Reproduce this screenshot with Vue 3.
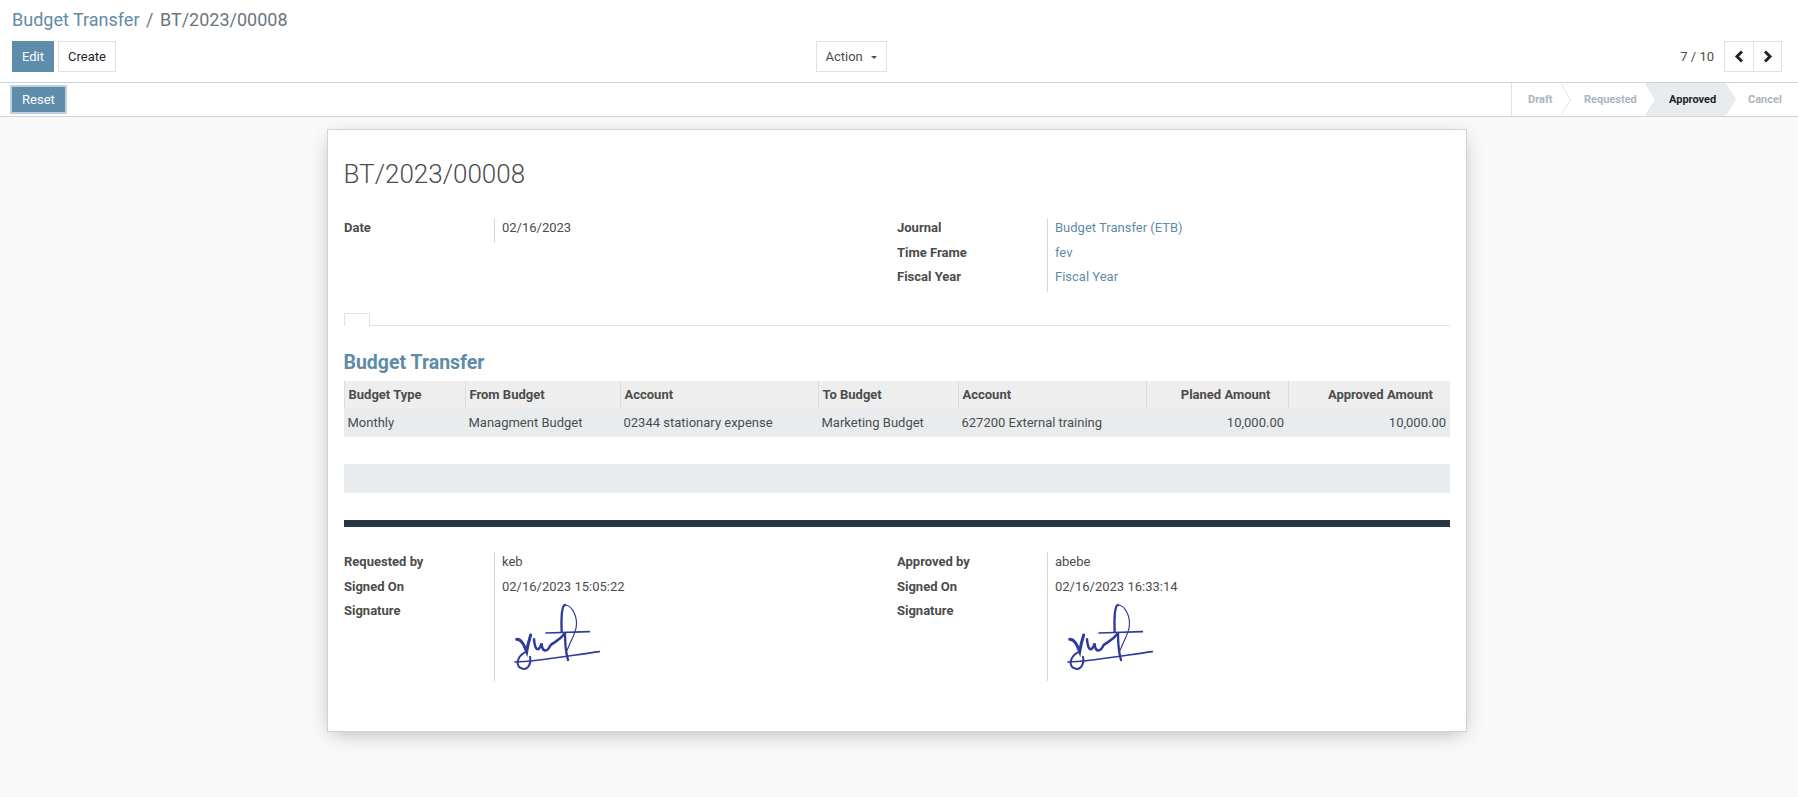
<template>
  <div class="page">
    <div class="control-panel">
      <div class="breadcrumb">
        <a class="crumb-link">Budget Transfer</a>
        <span class="crumb-sep">/</span>
        <span class="crumb-current">BT/2023/00008</span>
      </div>
      <div class="cp-row">
        <div class="cp-left">
          <button class="btn btn-primary">Edit</button>
          <button class="btn btn-white">Create</button>
        </div>
        <div class="cp-center">
          <button class="btn btn-white btn-action">Action<span class="caret"></span></button>
        </div>
        <div class="cp-right">
          <span class="pager-value">7 / 10</span>
          <div class="pager-buttons">
            <button class="btn btn-white pager-btn pager-prev">
              <svg width="10" height="13" viewBox="0 0 10 13"><path d="M8 1.5 3 6.5l5 5" fill="none" stroke="#212529" stroke-width="3" /></svg>
            </button>
            <button class="btn btn-white pager-btn pager-next">
              <svg width="10" height="13" viewBox="0 0 10 13"><path d="M2 1.5l5 5-5 5" fill="none" stroke="#212529" stroke-width="3" /></svg>
            </button>
          </div>
        </div>
      </div>
    </div>

    <div class="statusbar">
      <button class="btn-reset">Reset</button>
      <div class="steps">
        <div v-for="(step, i) in steps" :key="step" class="step" :class="['step-' + i, { active: step === 'Approved' }]" :style="{ zIndex: 10 - i }">{{ step }}</div>
      </div>
    </div>

    <div class="sheet-wrap">
      <div class="sheet">
        <h1 class="title">BT/2023/00008</h1>

        <div class="group-row top-group">
          <div class="group">
            <div class="field"><label>Date</label><div class="value">02/16/2023</div></div>
          </div>
          <div class="group">
            <div class="field"><label>Journal</label><div class="value link">Budget Transfer (ETB)</div></div>
            <div class="field"><label>Time Frame</label><div class="value link">fev</div></div>
            <div class="field"><label>Fiscal Year</label><div class="value link">Fiscal Year</div></div>
          </div>
        </div>

        <div class="tabs"><div class="tab"></div></div>

        <h2 class="section-title">Budget Transfer</h2>

        <table class="lines">
          <colgroup>
            <col v-for="w in colWidths" :key="w" :style="{ width: w + 'px' }" />
          </colgroup>
          <thead>
            <tr>
              <th>Budget Type</th>
              <th>From Budget</th>
              <th>Account</th>
              <th>To Budget</th>
              <th>Account</th>
              <th class="num">Planed Amount</th>
              <th class="num">Approved Amount</th>
            </tr>
          </thead>
          <tbody>
            <tr>
              <td>Monthly</td>
              <td>Managment Budget</td>
              <td>02344 stationary expense</td>
              <td>Marketing Budget</td>
              <td>627200 External training</td>
              <td class="num">10,000.00</td>
              <td class="num">10,000.00</td>
            </tr>
          </tbody>
        </table>

        <div class="grey-band"></div>
        <div class="dark-bar"></div>

        <div class="group-row">
          <div v-for="s in signers" :key="s.label" class="group">
            <div class="field"><label>{{ s.label }}</label><div class="value">{{ s.name }}</div></div>
            <div class="field"><label>Signed On</label><div class="value">{{ s.date }}</div></div>
            <div class="field sign-field">
              <label>Signature</label>
              <div class="value">
                <svg class="signature" width="95" height="75" viewBox="0 0 285 225">
                  <path v-for="(d, i) in signaturePaths" :key="i" :d="d.path" :stroke-width="d.width" fill="none" stroke="#2e3a9c" stroke-linecap="round" />
                </svg>
              </div>
            </div>
          </div>
        </div>
      </div>
    </div>
  </div>
</template>

<script setup>
const steps = ['Draft', 'Requested', 'Approved', 'Cancel']
const colWidths = [121, 155, 198, 140, 188, 142, 162]

const signers = [
  { label: 'Requested by', name: 'keb', date: '02/16/2023 15:05:22' },
  { label: 'Approved by', name: 'abebe', date: '02/16/2023 16:33:14' }
]

// hand signature, traced roughly from the scan
const signaturePaths = [
  { path: 'M155 95C153 60 155 15 165 15', width: 7 },
  { path: 'M165 15C185 15 205 50 198 85C192 110 178 130 172 150', width: 3.5 },
  { path: 'M108 99L238 95', width: 5 },
  { path: 'M15 186C80 185 190 165 268 155', width: 5 },
  { path: 'M20 118C35 118 42 135 50 155C53 135 58 118 62 105', width: 9 },
  { path: 'M50 155C25 165 15 190 30 203C50 215 65 195 60 170', width: 6 },
  { path: 'M72 118C75 150 85 160 95 130C96 155 110 160 122 135C135 125 150 120 165 100', width: 7.5 },
  { path: 'M165 100C165 130 168 160 174 180', width: 7 }
]
</script>

<style>
html, body {
  margin: 0;
  background: #f9f9f9;
}
</style>

<style scoped>
.page {
  min-height: 797px;
  font-family: Roboto, "Liberation Sans", sans-serif;
  font-size: 13px;
  color: #4c4c4c;
  background: #f9f9f9;
}

button {
  font-family: inherit;
  font-size: 13px;
  cursor: pointer;
}

.control-panel {
  background: #fff;
  height: 82px;
  padding: 0 16px 0 12px;
  border-bottom: 1px solid #ced4da;
}

.breadcrumb {
  height: 41px;
  line-height: 40px;
  font-size: 18px;
  color: #6c757d;
}

.crumb-link {
  color: #5f8ba8;
}

.crumb-sep {
  margin: 0 6.5px;
}

.cp-row {
  display: grid;
  grid-template-columns: 1fr auto 1fr;
  align-items: start;
}

.cp-left {
  display: flex;
  gap: 4px;
}

.cp-center {
  margin-right: 92px;
}

.cp-right {
  display: flex;
  justify-content: flex-end;
  align-items: center;
  height: 31px;
}

.btn {
  height: 31px;
  padding: 0 9px;
  border: 1px solid transparent;
  border-radius: 0;
  box-sizing: border-box;
  white-space: nowrap;
}

.btn-primary {
  background: #5e8cab;
  border-color: #5e8cab;
  color: #fff;
}

.btn-white {
  background: #fff;
  border-color: #dee2e6;
  color: #212529;
}

.btn-action {
  width: 71px;
  color: #4c4c4c;
}

.caret {
  display: inline-block;
  margin-left: 8px;
  vertical-align: 2px;
  border-top: 3.5px solid #4c4c4c;
  border-left: 3.5px solid transparent;
  border-right: 3.5px solid transparent;
}

.pager-value {
  margin-right: 10px;
  color: #4c4c4c;
}

.pager-buttons {
  display: flex;
}

.pager-btn {
  display: flex;
  align-items: center;
  justify-content: center;
  padding: 0;
}

.pager-prev {
  width: 30px;
}

.pager-next {
  width: 29px;
  margin-left: -1px;
}

.statusbar {
  display: flex;
  justify-content: space-between;
  align-items: center;
  height: 33px;
  background: #fff;
  border-bottom: 1px solid #ced4da;
  padding-left: 12px;
}

.btn-reset {
  height: 25px;
  width: 53px;
  padding: 0;
  background: #5e8cab;
  color: #fff;
  border: none;
  box-shadow: 0 0 0 2px #bfd1de;
}

.steps {
  display: flex;
  height: 33px;
  border-left: 1px solid #dee2e6;
}

.step {
  position: relative;
  box-sizing: border-box;
  line-height: 33px;
  font-size: 11px;
  font-weight: 700;
  color: #adb5bd;
  background: #fff;
  padding-left: 23px;
}

.step-0 {
  width: 49px;
  padding-left: 16px;
}

.step-1 {
  width: 85px;
}

.step-2 {
  width: 80px;
}

.step-3 {
  width: 72px;
  padding-left: 22px;
}

.step:not(.step-3)::before,
.step:not(.step-3)::after {
  content: "";
  position: absolute;
  top: 0;
  bottom: 0;
  width: 10px;
  clip-path: polygon(0 0, 100% 50%, 0 100%);
}

.step::before {
  left: 100%;
  background: #dee2e6;
}

.step::after {
  left: calc(100% - 1px);
  background: #fff;
}

.step.active {
  background: #e9ecef;
  color: #212529;
}

.step.active::before,
.step.active::after {
  background: #e9ecef;
}

.sheet-wrap {
  display: flex;
  justify-content: center;
  padding: 12px 5px 0 0;
}

.sheet {
  box-sizing: border-box;
  width: 1140px;
  height: 603px;
  padding: 0 16px;
  background: #fff;
  border: 1px solid #ced4da;
  box-shadow: 0 5px 20px -5px rgba(0, 0, 0, 0.3);
}

.title {
  margin: 0;
  padding: 27px 0;
  height: 34px;
  line-height: 34px;
  font-size: 26px;
  font-weight: 300;
  color: #4c4c4c;
}

.group-row {
  display: grid;
  grid-template-columns: 1fr 1fr;
}

.top-group {
  height: 94px;
}

.group {
  display: flex;
  flex-direction: column;
}

.field {
  display: grid;
  grid-template-columns: 150px 1fr;
  line-height: 20.5px;
}

.field label {
  font-weight: 700;
  padding-left: 0.5px;
  padding-bottom: 4px;
}

.value {
  border-left: 1px solid #d5d8db;
  padding-left: 7.5px;
  padding-bottom: 4px;
}

.link {
  color: #5f8ba8;
}

.tabs {
  height: 12px;
  padding-top: 1px;
  border-bottom: 1px solid #dee2e6;
}

.tab {
  width: 24px;
  height: 12px;
  border: 1px solid #dee2e6;
  border-bottom: none;
  background: #fff;
}

.section-title {
  margin: 0;
  padding-top: 25px;
  height: 30px;
  line-height: 24px;
  font-size: 19.5px;
  font-weight: 700;
  color: #5f8ba8;
}

.lines {
  width: 1106px;
  table-layout: fixed;
  border-collapse: collapse;
}

.lines th,
.lines td {
  height: 26px;
  padding: 0 4px 2px;
  text-align: left;
  white-space: nowrap;
  overflow: hidden;
}

.lines th {
  font-weight: 700;
  background: #eeeeee;
  border-left: 1px solid #dcdcdc;
}

.lines th.num {
  text-align: right;
  padding-right: 17px;
}

.lines td {
  background: #e9ecef;
  padding-left: 3.5px;
}

.lines td.num {
  text-align: right;
  padding-right: 4px;
}

.grey-band {
  margin-top: 27px;
  height: 29px;
  background: #e9ecef;
}

.dark-bar {
  margin-top: 27px;
  margin-bottom: 25px;
  height: 7px;
  background: #263642;
}

.sign-field .value {
  height: 80px;
  padding-bottom: 0;
}

.signature {
  display: block;
  margin: -1px 0 0 7.5px;
  filter: blur(0.4px);
}
</style>
